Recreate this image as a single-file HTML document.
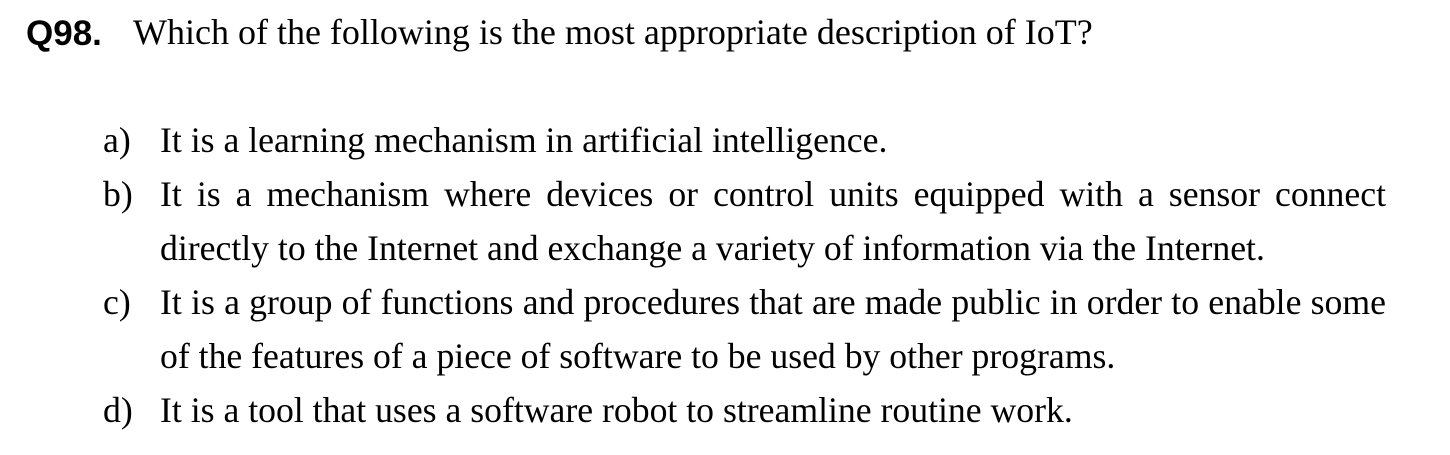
<!DOCTYPE html>
<html><head><meta charset="utf-8"><style>
body{margin:0;width:1450px;height:455px;background:#fff;overflow:hidden;position:relative;color:#000}
.q{position:absolute;left:26px;top:12px;font-family:"Liberation Sans",sans-serif;font-weight:bold;font-size:35px;line-height:44px}
.qt{position:absolute;left:133px;top:10px;font-family:"Liberation Serif",serif;font-size:36px;line-height:44px;white-space:nowrap}
.o{position:absolute;left:103px;width:1283px;font-family:"Liberation Serif",serif;font-size:35.7px;line-height:54px}
.o .l{position:absolute;left:0;top:0}
.o .t{margin-left:57px;text-align:justify;text-align-last:left}
</style></head><body>
<div class="q">Q98.</div>
<div class="qt">Which of the following is the most appropriate description of IoT?</div>
<div class="o" style="top:113px"><span class="l">a)</span><div class="t">It is a learning mechanism in artificial intelligence.</div></div>
<div class="o" style="top:167px"><span class="l">b)</span><div class="t">It is a mechanism where devices or control units equipped with a sensor connect directly to the Internet and exchange a variety of information via the Internet.</div></div>
<div class="o" style="top:275px"><span class="l">c)</span><div class="t">It is a group of functions and procedures that are made public in order to enable some of the features of a piece of software to be used by other programs.</div></div>
<div class="o" style="top:383px"><span class="l">d)</span><div class="t">It is a tool that uses a software robot to streamline routine work.</div></div>
</body></html>
